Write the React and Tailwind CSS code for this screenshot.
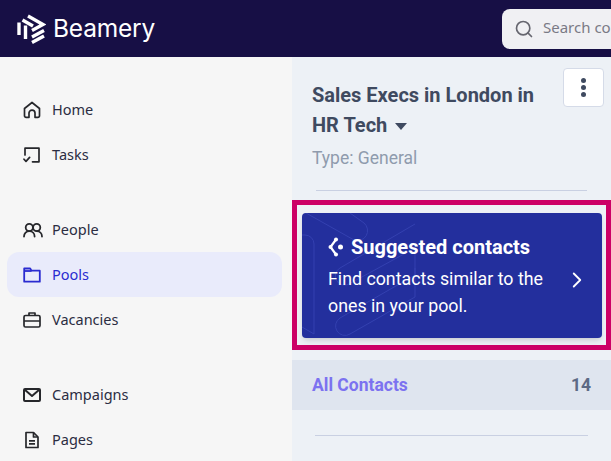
import React from "react";
import { ChevronRight, Search } from "lucide-react";

const HomeIcon = () => (
  <svg width="18" height="18" viewBox="0 0 18 18" fill="none" stroke="currentColor" strokeWidth="1.7" strokeLinejoin="round">
    <path d="M1.5 7.5 9 1.5l7.5 6v7.2a1.6 1.6 0 0 1-1.6 1.6H12v-4.2a3 3 0 0 0-6 0v4.2H3.1a1.6 1.6 0 0 1-1.6-1.6z" />
  </svg>
);

const TasksIcon = () => (
  <svg width="18" height="18" viewBox="0 0 18 18" fill="none" stroke="currentColor" strokeWidth="1.7" strokeLinecap="round" strokeLinejoin="round">
    <path d="M2 9V2.2h14v13.6H9.5" />
    <path d="M1 13.2l2 2.2 3.6-4" />
  </svg>
);

const PeopleIcon = () => (
  <svg width="20" height="18" viewBox="0 0 20 18" fill="none" stroke="currentColor" strokeWidth="1.8" strokeLinecap="round">
    <circle cx="6.3" cy="6.5" r="3.6" />
    <path d="M1 15.5c0-3.2 2.4-5.4 5.3-5.4s5.3 2.2 5.3 5.4" />
    <circle cx="13.7" cy="6.5" r="3.6" />
    <path d="M13.7 10.1c2.9 0 5.3 2.2 5.3 5.4" />
  </svg>
);

const FolderIcon = () => (
  <svg width="18" height="18" viewBox="0 0 18 18" fill="none" stroke="currentColor" strokeWidth="1.8" strokeLinejoin="round">
    <path d="M1.2 2.5h6l1.3 2.2h8.3v11H1.2z" />
    <path d="M1.2 5h7.3" />
  </svg>
);

const CaseIcon = () => (
  <svg width="18" height="18" viewBox="0 0 18 18" fill="none" stroke="currentColor" strokeWidth="1.7" strokeLinejoin="round">
    <rect x="1" y="4.5" width="16" height="11.5" rx="1.5" />
    <path d="M1 10h16M6 4.500V2h6v2.500" />
  </svg>
);

const MailIcon = () => (
  <svg width="18" height="18" viewBox="0 0 18 18" fill="none" stroke="currentColor" strokeWidth="2" strokeLinejoin="round">
    <rect x="1" y="3" width="16" height="12" rx="1" />
    <path d="M1.5 3.5 9 10l7.500-6.500" />
  </svg>
);

const PageIcon = () => (
  <svg width="18" height="18" viewBox="0 0 18 18" fill="none" stroke="currentColor" strokeWidth="1.7" strokeLinejoin="round">
    <path d="M3 1.5h7.5L15 6v10.5H3z" />
    <path d="M10.5 1.5V6H15M6 9.8h6M6 12.8h6" />
  </svg>
);

const Logo = () => (
  <svg width="29" height="30" viewBox="0 0 29 30" fill="none" stroke="white" strokeWidth="3.4">
    <path d="M11 2 26 10.500 15 16.500" />
    <path d="M5.500 6 16 12" />
    <path d="M2 8.500V21" />
    <path d="M8.500 11.500V25" />
    <path d="M15 23 27 16.500" />
    <path d="M15 28.500 27 22" />
  </svg>
);

const SuggestIcon = () => (
  <svg width="16" height="20" viewBox="0 0 16 20" fill="none" stroke="white" strokeWidth="2.2" strokeLinecap="round">
    <path d="M8 2.500 2.500 10 8 17.500" />
    <circle cx="8" cy="2.500" r="2" fill="white" stroke="none" />
    <circle cx="2.500" cy="10" r="2" fill="white" stroke="none" />
    <circle cx="8" cy="17.500" r="2" fill="white" stroke="none" />
    <circle cx="12.500" cy="10" r="2.500" fill="white" stroke="none" />
  </svg>
);

const NavItem = ({ icon, label, active }) => (
  <div
    className={`flex h-[45px] items-center rounded-xl pl-[16px] ${
      active ? "bg-[#e9ebfb] text-[#2a2bd0]" : "text-[#2b2d42]"
    }`}
  >
    <span className={`flex w-[29px] shrink-0 justify-start ${active ? "text-[#2a2bd0]" : "text-[#26272b]"}`}>{icon}</span>
    <span className="text-[14.5px]">{label}</span>
  </div>
);

const App = () => {
  return (
    <div className="flex h-[461px] w-[611px] flex-col overflow-hidden">
      <header className="flex h-[57px] shrink-0 items-center justify-between bg-[#170f45] pl-[17px]">
        <div className="flex items-center gap-[7px]">
          <Logo />
          <span className="pb-[2px] font-['Inter',sans-serif] text-[24.5px] leading-[30px] tracking-[-0.2px] text-white">Beamery</span>
        </div>
        <div className="flex h-[40px] w-[109px] items-center gap-[9px] overflow-hidden rounded-l-lg bg-[#f0f0f3] pl-[12px] pb-[2px] font-['Noto_Sans',sans-serif] text-[15px] text-[#7a7a85]">
          <Search size={20} className="mt-[2px] shrink-0 text-[#66666f]" />
          <span className="whitespace-nowrap">Search co</span>
        </div>
      </header>

      <div className="flex min-h-0 flex-1">
        <aside className="w-[292px] shrink-0 bg-[#f6f6f6] pl-[7px] pr-[10px] pt-[30px] font-['Noto_Sans',sans-serif]">
          <div>
            <NavItem icon={<HomeIcon />} label="Home" />
            <NavItem icon={<TasksIcon />} label="Tasks" />
          </div>
          <div className="mt-[30px]">
            <NavItem icon={<PeopleIcon />} label="People" />
            <NavItem icon={<FolderIcon />} label="Pools" active />
            <NavItem icon={<CaseIcon />} label="Vacancies" />
          </div>
          <div className="mt-[30px]">
            <NavItem icon={<MailIcon />} label="Campaigns" />
            <NavItem icon={<PageIcon />} label="Pages" />
          </div>
        </aside>

        <main className="relative flex-1 bg-[#edf1f6] font-['Roboto',sans-serif]">
          <div className="px-[20px] pt-[23px]">
            <div className="flex items-start justify-between">
              <h1 className="w-[240px] text-[20px] leading-[30px] font-bold text-[#3f4a60]">
                Sales Execs in London in HR Tech
                <span className="ml-[8px] inline-block h-0 w-0 border-x-[6px] border-t-[7px] border-x-transparent border-t-[#3f4a60] align-middle"></span>
              </h1>
            </div>
            <p className="mt-[6px] text-[17.5px] leading-[24px] text-[#8f9bad]">Type: General</p>
          </div>

          <button className="absolute top-[11px] left-[271px] flex h-[39px] w-[41px] flex-col items-center justify-center gap-[2px] rounded-[4px] border border-[#d5dbe8] bg-white">
            <span className="h-[5px] w-[5px] rounded-full bg-[#3f4a60]"></span>
            <span className="h-[5px] w-[5px] rounded-full bg-[#3f4a60]"></span>
            <span className="h-[5px] w-[5px] rounded-full bg-[#3f4a60]"></span>
          </button>

          <div className="mx-[24px] mt-[20px] h-px bg-[#c9d0e2]"></div>

          <div className="mt-[9px] flex h-[150px] items-center border-[5px] border-[#cc0066] pr-[4px] pl-[5px]">
            <div className="relative flex h-[125px] flex-1 items-center overflow-hidden rounded-[4px] bg-[#232f9d] pl-[26px] pr-[12px] text-white shadow-md">
              <svg className="absolute top-0 left-0" width="130" height="125" viewBox="0 0 130 125" fill="none" stroke="#3441b0" strokeWidth="1">
                <path d="M4 0 52 27a10 10 0 0 0 10-17L48 0" />
                <path d="M0 22h3a9 9 0 0 1 9 9v90L0 114" />
                <path d="M113 11 38 55a9 9 0 0 0 9 16l66-36v27L38 105a9 9 0 0 0 10 16l65-37V55" />
              </svg>
              <div className="relative flex-1 pt-[3px]">
                <div className="flex items-center gap-[7px] text-[20px] leading-[24px] font-bold">
                  <SuggestIcon />
                  <span>Suggested contacts</span>
                </div>
                <p className="mt-[6px] w-[230px] text-[17.8px] leading-[27px]">
                  Find contacts similar to the ones in your pool.
                </p>
              </div>
              <ChevronRight size={26} strokeWidth={1.7} className="relative mt-[9px] shrink-0" />
            </div>
          </div>

          <div className="mt-[10px] flex h-[50px] items-center justify-between bg-[#dfe5ef] px-[20px] text-[17.5px] font-bold">
            <span className="text-[#7c72f0]">All Contacts</span>
            <span className="text-[#5d6a85]">14</span>
          </div>

          <div className="mx-[23px] mt-[25px] h-px bg-[#c9d0e2]"></div>
        </main>
      </div>
    </div>
  );
};

export default App;
